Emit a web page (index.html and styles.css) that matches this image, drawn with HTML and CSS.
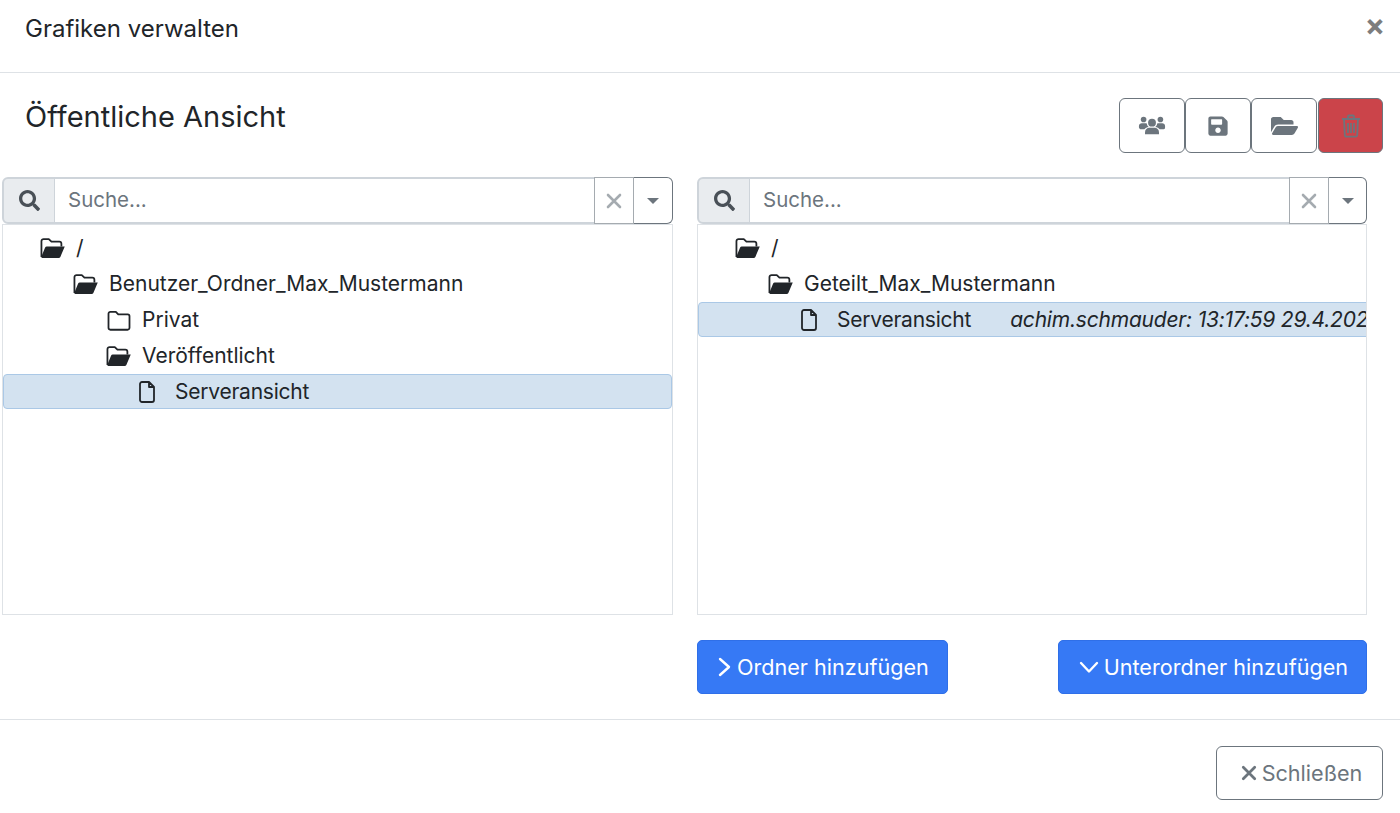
FILE: index.html
```html
<!DOCTYPE html>
<html lang="de">
<head>
  <meta charset="UTF-8" />
  <title>Grafiken verwalten</title>
  <link rel="stylesheet" href="styles.css">
</head>
<body>
  <svg class="sprite" aria-hidden="true">
    <symbol id="ico-open-dark" viewBox="0 0 24 20">
      <path d="M1 18V3a2 2 0 0 1 2-2h5l2.500 2.500H18a2 2 0 0 1 2 2V8" fill="none" stroke="currentColor" stroke-width="1.700" stroke-linejoin="round"/>
      <path d="M6 8h17.200L19 18a1.800 1.800 0 0 1-1.700 1H2a1 1 0 0 1-1-1.500L4.500 9A2 2 0 0 1 6 8z" fill="currentColor"/>
    </symbol>
    <symbol id="ico-folder" viewBox="0 0 24 20">
      <path d="M2 17V3.500A1.800 1.800 0 0 1 3.800 1.700H9l2.300 2.500h9A1.800 1.800 0 0 1 22 6v11a1.800 1.800 0 0 1-1.800 1.800H3.800A1.800 1.800 0 0 1 2 17z" fill="none" stroke="currentColor" stroke-width="1.700" stroke-linejoin="round"/>
    </symbol>
    <symbol id="ico-file" viewBox="0 0 18 22">
      <path d="M2 3a2 2 0 0 1 2-2h7l5 5v13a2 2 0 0 1-2 2H4a2 2 0 0 1-2-2z M11 1v5h5" fill="none" stroke="currentColor" stroke-width="1.800" stroke-linejoin="round"/>
    </symbol>
    <symbol id="ico-search" viewBox="0 0 512 512">
      <path fill="currentColor" d="M505 442.700L405.300 343c-4.500-4.500-10.600-7-17-7H372c27.600-35.300 44-79.700 44-128C416 93.100 322.900 0 208 0S0 93.100 0 208s93.100 208 208 208c48.300 0 92.700-16.400 128-44v16.300c0 6.400 2.500 12.500 7 17l99.700 99.700c9.400 9.400 24.600 9.400 33.900 0l28.300-28.300c9.400-9.400 9.400-24.600.1-34zM208 336c-70.700 0-128-57.200-128-128 0-70.700 57.200-128 128-128 70.700 0 128 57.200 128 128 0 70.700-57.200 128-128 128z"/>
    </symbol>
    <symbol id="ico-x" viewBox="0 0 16 16">
      <path d="M2 2l12 12M14 2L2 14" fill="none" stroke="currentColor" stroke-width="2.600" stroke-linecap="round"/>
    </symbol>
  </svg>

  <div class="modal">
    <div class="modal-header">
      <h5>Grafiken verwalten</h5>
      <span class="close">&times;</span>
    </div>

    <div class="modal-body">
      <div class="title-row">
        <h4>Öffentliche Ansicht</h4>
        <div class="toolbar">
          <button class="tool-btn" type="button">
            <svg width="28" height="23" viewBox="0 0 30 24"><g fill="currentColor"><circle cx="15" cy="9" r="4.200"/><path d="M7.500 21.500v-2.300c0-3 2.400-4.700 4.500-4.700h6c2.100 0 4.500 1.700 4.500 4.700v2.300z"/><circle cx="6" cy="5.500" r="3"/><circle cx="24" cy="5.500" r="3"/><path d="M1 14v-1.500C1 10.500 2.500 9.500 4 9.500h4c.5 0 1 .1 1.400.3.200 1.600 1 3 2 3.700-2 .3-3.600 1-4.600 2.500H2.500C1.500 15.500 1 15 1 14z"/><path d="M29 14v-1.500c0-2-1.500-3-3-3h-4c-.5 0-1 .1-1.400.3-.2 1.600-1 3-2 3.700 2 .3 3.600 1 4.600 2.500h4.300c1 0 1.500-.5 1.500-2z"/></g></svg>
          </button>
          <button class="tool-btn" type="button">
            <svg width="20" height="22" viewBox="0 0 448 512"><path fill="currentColor" d="M433.900 129.900l-83.900-83.900A48 48 0 0 0 316.100 32H48C21.500 32 0 53.500 0 80v352c0 26.500 21.500 48 48 48h352c26.500 0 48-21.500 48-48V163.900a48 48 0 0 0-14.100-34zM224 416c-35.300 0-64-28.700-64-64 0-35.300 28.700-64 64-64s64 28.700 64 64c0 35.300-28.700 64-64 64zm96-304.500V212c0 6.600-5.400 12-12 12H76c-6.600 0-12-5.400-12-12V108c0-6.600 5.400-12 12-12h228.500c3.200 0 6.200 1.300 8.500 3.500l3.500 3.500c2.200 2.200 3.500 5.300 3.500 8.500z"/></svg>
          </button>
          <button class="tool-btn" type="button">
            <svg width="27" height="24" viewBox="0 0 576 512"><path fill="currentColor" d="M572.700 292.100L500.300 416.200A64 64 0 0 1 445 448H45c-18.500 0-30.100-20.100-20.700-36.100l72.400-124.200A64 64 0 0 1 152 256h400c18.500 0 30.100 20.100 20.700 36.100zM152 224h328v-48c0-26.500-21.500-48-48-48H272l-64-64H48C21.500 64 0 85.500 0 112v278l69.100-118.400C86.200 242.300 118 224 152 224z"/></svg>
          </button>
          <button class="tool-btn tool-danger" type="button">
            <svg width="20" height="24" viewBox="0 0 20 24"><path d="M1 5h18M7 4.500V2.500a1 1 0 0 1 1-1h4a1 1 0 0 1 1 1v2M3 5l.8 16a1.800 1.800 0 0 0 1.800 1.700h8.800a1.800 1.800 0 0 0 1.800-1.700L17 5M7 9v10M10 9v10M13 9v10" fill="none" stroke="currentColor" stroke-width="1.800"/></svg>
          </button>
        </div>
      </div>

      <div class="panels">
        <div class="panel">
          <div class="search-group">
            <span class="search-addon"><svg class="search-ico"><use href="#ico-search"/></svg></span>
            <input class="search-input" type="text" placeholder="Suche...">
            <button class="clear-btn" type="button"><svg class="x-ico"><use href="#ico-x"/></svg></button>
            <button class="caret-btn" type="button"><span class="caret"></span></button>
          </div>
          <div class="tree">
            <div class="node lvl-1"><svg class="ico-f"><use href="#ico-open-dark"/></svg><span>/</span></div>
            <div class="node lvl-2"><svg class="ico-f"><use href="#ico-open-dark"/></svg><span>Benutzer_Ordner_Max_Mustermann</span></div>
            <div class="node lvl-3"><svg class="ico-f"><use href="#ico-folder"/></svg><span>Privat</span></div>
            <div class="node lvl-3"><svg class="ico-f"><use href="#ico-open-dark"/></svg><span>Veröffentlicht</span></div>
            <div class="node lvl-4 selected"><svg class="ico-d"><use href="#ico-file"/></svg><span class="leaf">Serveransicht</span></div>
          </div>
        </div>

        <div class="panel panel-right">
          <div class="search-group">
            <span class="search-addon"><svg class="search-ico"><use href="#ico-search"/></svg></span>
            <input class="search-input" type="text" placeholder="Suche...">
            <button class="clear-btn" type="button"><svg class="x-ico"><use href="#ico-x"/></svg></button>
            <button class="caret-btn" type="button"><span class="caret"></span></button>
          </div>
          <div class="tree">
            <div class="node lvl-1"><svg class="ico-f"><use href="#ico-open-dark"/></svg><span>/</span></div>
            <div class="node lvl-2"><svg class="ico-f"><use href="#ico-open-dark"/></svg><span>Geteilt_Max_Mustermann</span></div>
            <div class="node lvl-3 selected wide"><svg class="ico-d"><use href="#ico-file"/></svg><span class="leaf">Serveransicht</span><em class="note">achim.schmauder: 13:17:59 29.4.2021</em></div>
          </div>
          <div class="tree-actions">
            <button class="btn-primary" type="button">
              <svg width="14" height="20" viewBox="0 0 14 20"><path d="M2 2l9 8-9 8" fill="none" stroke="currentColor" stroke-width="2.400" stroke-linecap="round" stroke-linejoin="round"/></svg>
              Ordner hinzufügen
            </button>
            <button class="btn-primary" type="button">
              <svg width="20" height="14" viewBox="0 0 20 14"><path d="M2 3l8 8.500L18 3" fill="none" stroke="currentColor" stroke-width="2.400" stroke-linecap="round" stroke-linejoin="round"/></svg>
              Unterordner hinzufügen
            </button>
          </div>
        </div>
      </div>
    </div>

    <div class="modal-footer">
      <button class="btn-close" type="button">
        <svg width="16" height="16" viewBox="0 0 14 14"><path d="M2 2l10 10M12 2L2 12" fill="none" stroke="currentColor" stroke-width="2.400" stroke-linecap="round"/></svg>
        Schließen
      </button>
    </div>
  </div>
</body>
</html>
```

FILE: styles.css
```css
* {
  box-sizing: border-box;
}

body {
  margin: 0;
  background: #fff;
  color: #212529;
  font-family: Inter, "Liberation Sans", Arial, sans-serif;
  font-size: 21px;
  overflow: hidden;
}

.sprite {
  display: none;
}

.modal {
  width: 1400px;
  height: 813px;
}

.modal-header {
  height: 73px;
  padding: 0 15px 0 25px;
  display: flex;
  justify-content: space-between;
  border-bottom: 1px solid #dee2e6;
}

.modal-header h5 {
  margin: 16px 0 0;
  font-size: 24px;
  font-weight: 400;
  line-height: 26px;
}

.close {
  margin-top: 8px;
  font-size: 30px;
  line-height: 34px;
  font-weight: 700;
  color: #7d7d7d;
}

.modal-body {
  height: 647px;
  padding: 25px 17px 0 2px;
  border-bottom: 1px solid #dee2e6;
}

.title-row {
  height: 79px;
  padding-left: 23px;
  display: flex;
  justify-content: space-between;
}

.title-row h4 {
  margin: 0;
  font-size: 29px;
  font-weight: 400;
  line-height: 38px;
}

.toolbar {
  display: flex;
  height: 55px;
}

.tool-btn {
  width: 66px;
  height: 55px;
  padding: 0;
  border: 1px solid #6c757d;
  border-radius: 6px;
  background: #fff;
  color: #6c757d;
  display: flex;
  align-items: center;
  justify-content: center;
}

.tool-danger {
  width: 65px;
  margin-left: 1px;
  background: #cb444a;
}

.panels {
  display: flex;
  gap: 24px;
}

.panel {
  width: 671px;
}

.panel-right {
  width: 670px;
}

.search-group {
  height: 47px;
  display: flex;
}

.search-addon {
  width: 53px;
  background: #e9ecef;
  border: 2px solid #ced4da;
  border-right-width: 1px;
  border-radius: 6px 0 0 6px;
  color: #495057;
  display: flex;
  align-items: center;
  justify-content: center;
}

.search-ico {
  width: 21px;
  height: 21px;
}

.search-input {
  flex: 1;
  min-width: 0;
  padding: 0 13px 2px;
  border: 2px solid #ced4da;
  border-left: none;
  border-right: none;
  font: inherit;
  font-size: 20.500px;
  outline: none;
}

.search-input::placeholder {
  color: #6c757d;
  opacity: 1;
}

.clear-btn {
  width: 40px;
  padding: 0;
  border: 1px solid #a5abb0;
  background: #fff;
  color: #a5abb0;
  display: flex;
  align-items: center;
  justify-content: center;
}

.x-ico {
  width: 16px;
  height: 16px;
}

.caret-btn {
  width: 39px;
  padding: 0;
  border: 1px solid #6c757d;
  border-left: none;
  border-radius: 0 6px 6px 0;
  background: #fff;
  display: flex;
  align-items: center;
  justify-content: center;
}

.panel-right .caret-btn {
  width: 38px;
}

.caret {
  border-top: 6px solid #6c757d;
  border-left: 6px solid transparent;
  border-right: 6px solid transparent;
}

.tree {
  height: 391px;
  border: 1px solid #dee2e6;
  padding-top: 5px;
  overflow: hidden;
}

.node {
  height: 36px;
  display: flex;
  align-items: center;
  white-space: nowrap;
  line-height: 26px;
}

.node span {
  flex: none;
}

.lvl-1 { padding-left: 37px; }
.lvl-2 { padding-left: 70px; }
.lvl-3 { padding-left: 103px; }
.lvl-4 { padding-left: 134px; }

.ico-f {
  flex: none;
  width: 26px;
  height: 21px;
  margin-right: 10px;
}

.ico-d {
  flex: none;
  width: 18px;
  height: 22px;
  margin-right: 19px;
}

.selected {
  height: 35px;
  padding-top: 1px;
  background: #d3e2f0;
  border: 1px solid #aac8e6;
  border-radius: 4px;
}

.lvl-3.selected {
  padding-left: 101px;
}

.wide {
  width: max-content;
}

.leaf {
  letter-spacing: -0.230px;
}

.note {
  flex: none;
  margin-left: 39px;
  letter-spacing: -0.200px;
}

.tree-actions {
  display: flex;
  justify-content: space-between;
  margin-top: 25px;
}

.btn-primary {
  height: 54px;
  padding: 0 18px 0 20px;
  border: 1px solid #2f6fe8;
  border-radius: 5px;
  background: #3679f5;
  color: #fff;
  font: inherit;
  font-size: 21.600px;
  display: flex;
  align-items: center;
  gap: 5px;
}

.modal-footer {
  display: flex;
  justify-content: flex-end;
  padding: 26px 17px 0 0;
}

.btn-close {
  width: 167px;
  height: 54px;
  padding: 0 0 0 4px;
  border: 1px solid #6c757d;
  border-radius: 6px;
  background: #fff;
  color: #6c757d;
  font: inherit;
  font-size: 21.600px;
  display: flex;
  align-items: center;
  justify-content: center;
  gap: 5px;
}
```
